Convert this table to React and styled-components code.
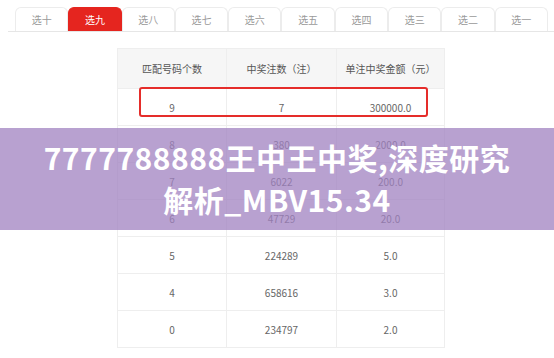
import React from "react";
import styled, { createGlobalStyle } from "styled-components";

const Global = createGlobalStyle`
  html, body { margin: 0; padding: 0; background: #fff; }
  body { font-family: "Microsoft YaHei", "Noto Sans CJK SC", "Liberation Sans", sans-serif; }
`;

const Page = styled.div`
  position: relative;
  width: 554px;
  height: 358px;
  overflow: hidden;
  background: #fff;
`;

const TabBar = styled.div`
  display: flex;
  margin: 7px 0 0 8px;
  padding-left: 7px;
  border-bottom: 1px solid #e6e6e6;
`;

const Tab = styled.div`
  box-sizing: border-box;
  width: 53.3px;
  height: 24px;
  display: flex;
  align-items: center;
  justify-content: center;
  font-size: 10px;
  color: ${(p) => (p.$active ? "#fff" : "#9a9a9a")};
  background: ${(p) => (p.$active ? "#e5251f" : "#fff")};
  border: 1px solid ${(p) => (p.$active ? "#e5251f" : "#ececec")};
  border-bottom: none;
  border-radius: 6px 6px 0 0;
`;

const TableWrap = styled.div`
  position: relative;
  width: 327px;
  margin: 16px 0 0 117px;
`;

const Table = styled.table`
  width: 100%;
  border-collapse: collapse;
  table-layout: fixed;
  font-size: 10px;
  color: #666;
`;

const Th = styled.th`
  height: 37px;
  font-weight: normal;
  background: #f6f6f6;
  border: 1px solid #eeeeee;
  text-align: center;
  color: #555;
`;

const Td = styled.td`
  height: 36px;
  border: 1px solid #eeeeee;
  text-align: center;
  padding: 0;
`;

const Highlight = styled.div`
  position: absolute;
  left: 22px;
  top: 39px;
  width: 289px;
  height: 30px;
  box-sizing: border-box;
  border: 2px solid #e52d2a;
  border-radius: 3px;
`;

const Banner = styled.div`
  position: absolute;
  left: 0;
  right: 0;
  top: 128px;
  height: 102px;
  padding-bottom: 2px;
  box-sizing: border-box;
  background: rgba(160, 130, 192, 0.75);
  display: flex;
  flex-direction: column;
  align-items: center;
  justify-content: center;
  color: #fff;
  font-family: "Noto Sans CJK SC", "Noto Sans", sans-serif;
  font-weight: 700;
  font-size: 30px;
  line-height: 42px;
  letter-spacing: 0.5px;
  text-align: center;
`;

const tabs = ["选十", "选九", "选八", "选七", "选六", "选五", "选四", "选三", "选二", "选一"];

const rows = [
  ["9", "7", "300000.0"],
  ["8", "380", "2000.0"],
  ["7", "6022", "200.0"],
  ["6", "47729", "20.0"],
  ["5", "224289", "5.0"],
  ["4", "658616", "3.0"],
  ["0", "234797", "2.0"],
];

export default function App() {
  return (
    <Page>
      <Global />
      <TabBar>
        {tabs.map((t) => (
          <Tab key={t} $active={t === "选九"}>
            {t}
          </Tab>
        ))}
      </TabBar>
      <TableWrap>
        <Table>
          <colgroup>
            <col style={{ width: 109 }} />
            <col style={{ width: 110 }} />
            <col style={{ width: 108 }} />
          </colgroup>
          <thead>
            <tr>
              <Th>匹配号码个数</Th>
              <Th>中奖注数（注）</Th>
              <Th>单注中奖金额（元）</Th>
            </tr>
          </thead>
          <tbody>
            {rows.map((r) => (
              <tr key={r[0]}>
                {r.map((c, i) => (
                  <Td key={i}>{c}</Td>
                ))}
              </tr>
            ))}
          </tbody>
        </Table>
        <Highlight />
      </TableWrap>
      <Banner>
        <div>7777788888王中王中奖,深度研究</div>
        <div>解析_MBV15.34</div>
      </Banner>
    </Page>
  );
}
